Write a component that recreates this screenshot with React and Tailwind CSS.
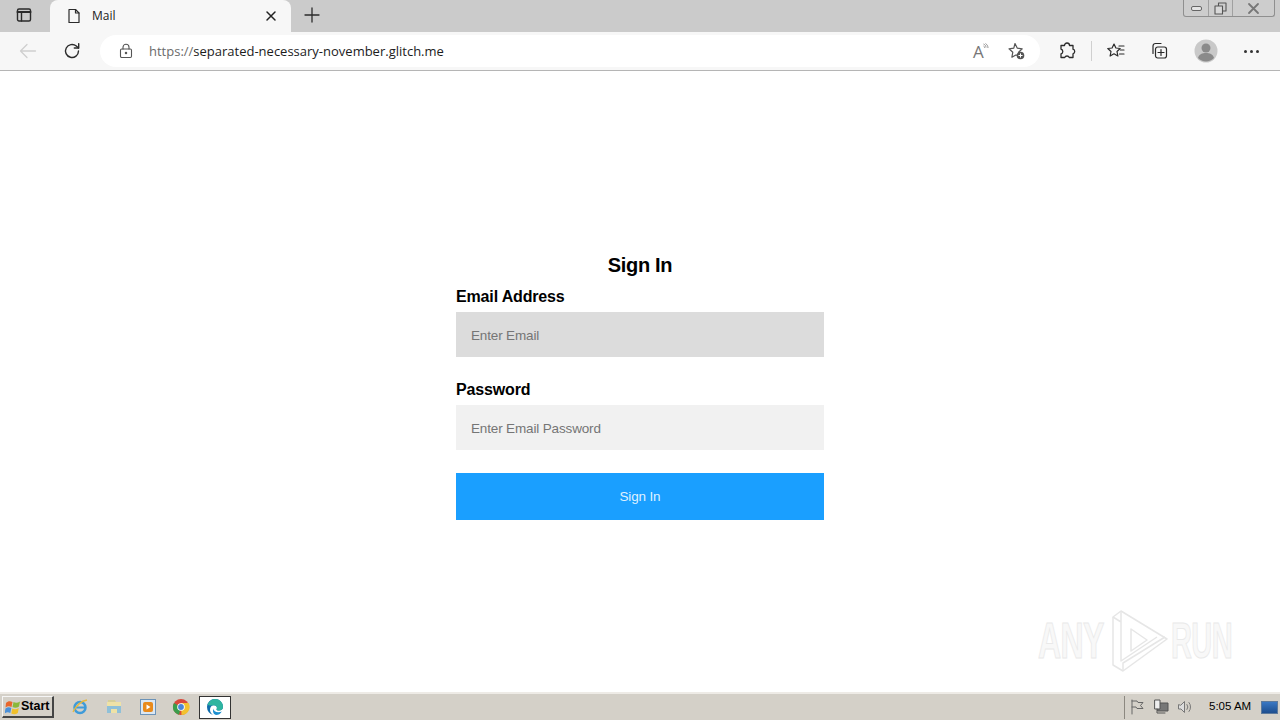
import React from "react";

const ink = "#2b2b2b";

function Stroke({ size = 20, children, color = ink, width = 1.3, viewBox = "0 0 20 20" }) {
  return (
    <svg width={size} height={size} viewBox={viewBox} fill="none" stroke={color} strokeWidth={width} strokeLinecap="round" strokeLinejoin="round">
      {children}
    </svg>
  );
}

function TabBar() {
  return (
    <div className="flex h-8 bg-[#cbcbcb]">
      <div className="flex w-[48px] items-center justify-center pb-[2px]">
        <Stroke size={16} viewBox="0 0 16 16" width={1.4}>
          <rect x="1.5" y="2" width="13" height="12" rx="1.5" />
          <path d="M1.5 5h13" strokeWidth="2" />
          <path d="M5.5 5v9" />
        </Stroke>
      </div>
      <div className="ml-[2px] flex w-[241px] items-center rounded-t-lg bg-[#f7f7f7] pl-[16px] pr-[14px]">
        <Stroke size={16} viewBox="0 0 16 16" width={1.2}>
          <path d="M3 1.5h6.5L13 5v9.5H3z" />
          <path d="M9.5 1.5V5H13" />
        </Stroke>
        <span className="ml-[10px] flex-1 text-[12px] text-[#222]">Mail</span>
        <Stroke size={12} viewBox="0 0 12 12" width={1.5} color="#222">
          <path d="M2 2l8 8M10 2l-8 8" />
        </Stroke>
      </div>
      <div className="ml-[13px] flex items-center pb-[2px]">
        <Stroke size={16} viewBox="0 0 16 16" width={1.3}>
          <path d="M8 1v14M1 8h14" />
        </Stroke>
      </div>
      <div className="flex-1" />
      <WindowButtons />
    </div>
  );
}

function WindowButtons() {
  return (
    <div className="mr-[5px] flex h-[17px] w-[92px] items-center rounded-b-[3px] border border-t-0 border-[#8f8f8f] bg-[#cdcdcd]">
      <div className="flex h-full w-[24px] items-center justify-center">
        <div className="h-[5px] w-[11px] rounded-[2px] border border-[#666] bg-[#e4e4e4]" />
      </div>
      <div className="flex h-full w-[25px] items-center justify-center border-x border-[#a0a0a0]">
        <Stroke size={13} viewBox="0 0 13 13" width={1.1} color="#555">
          <rect x="4.5" y="1" width="7.5" height="8" />
          <rect x="1" y="4" width="7.5" height="8" fill="#d8d8d8" />
        </Stroke>
      </div>
      <div className="flex h-full flex-1 items-center justify-center">
        <Stroke size={13} viewBox="0 0 13 13" width={1.8} color="#777">
          <path d="M2 2l9 9M11 2l-9 9" />
        </Stroke>
      </div>
    </div>
  );
}

function AddressBar() {
  return (
    <div className="flex h-[39px] items-center border-b border-[#b5b5b5] bg-[#f7f7f7]">
      <div className="flex w-[100px] shrink-0 items-center pl-[18px]">
        <Stroke size={20} color="#cfcfcf" width={1.3}>
          <path d="M17.5 10h-15M9 3.5L2.5 10 9 16.5" />
        </Stroke>
        <div className="ml-[24px]">
          <Stroke size={20} width={1.4}>
            <path d="M16.5 10a6.5 6.5 0 1 1-2.2-4.9L16.5 7" />
            <path d="M16.7 2.6V7h-4.4" />
          </Stroke>
        </div>
      </div>
      <div className="flex h-[32px] w-[940px] shrink-0 items-center rounded-full bg-white pl-[18px] pr-[14px]">
        <Stroke size={16} viewBox="0 0 16 16" width={1.1} color="#555">
          <rect x="2.5" y="6" width="11" height="8.5" rx="1.2" />
          <path d="M5 6V4.2a3 3 0 0 1 6 0V6" />
          <circle cx="8" cy="10" r="0.7" fill="#555" />
        </Stroke>
        <div className="ml-[15px] flex-1 pt-[1px] text-[13px]">
          <span className="text-[#6b6b6b]">https://</span>
          <span className="text-[#1c1c1c]">separated-necessary-november.glitch.me</span>
        </div>
        <div className="flex items-center gap-[17px]">
          <div className="flex w-[16px] items-start">
            <span className="text-[17px] leading-none text-[#777]">A</span>
            <svg width="6" height="8" viewBox="0 0 6 8" fill="none" stroke="#777" strokeWidth="0.8" className="-ml-[1px]">
              <path d="M0.500 1c1.500.5 2.500 2 2.500 3.500M0.500 3c.8.3 1.200 1 1.200 1.800M2.500 0.500c1.500 1 2.500 2.500 2.500 4.500" />
            </svg>
          </div>
          <Stroke size={20} color="#555" width={1.2}>
            <path d="M9 2.5l2.2 4.6 5 .7-3.6 3.4.6 3-3.4-.2-3.9 2.2.9-5L3 7.8l4.8-.7z" />
            <circle cx="14.5" cy="14.5" r="3.8" fill="#555" stroke="none" />
            <path d="M14.5 12.8v3.4M12.8 14.5h3.4" stroke="#fff" strokeWidth="1" />
          </Stroke>
        </div>
      </div>
      <div className="flex flex-1 items-center pl-[17px]">
        <Stroke size={20} width={1.3}>
          <path d="M7.5 4.5a2.5 2.5 0 0 1 5 0h3.5v3.7a2.4 2.4 0 0 1 0 4.6v3.7h-3.7a2.5 2.5 0 0 0-4.6 0H4v-3.6a2.5 2.5 0 0 0 0-4.8V4.5z" />
        </Stroke>
        <div className="ml-[14px] h-[20px] w-px bg-[#d0d0d0]" />
        <div className="ml-[14px]">
          <Stroke size={20} width={1.2}>
            <path d="M8 3l1.900 4 4.300.5-3.200 3 .9 4.500L8 12.800 4.100 15l.9-4.500-3.200-3L6.100 7z" />
            <path d="M13 5h5M14.500 9H18M13.500 13H18" />
          </Stroke>
        </div>
        <div className="ml-[23px]">
          <Stroke size={20} width={1.2}>
            <path d="M4 12.500V5a2.500 2.500 0 0 1 2.500-2.500H12" />
            <rect x="6.500" y="6" width="11" height="11" rx="2.200" />
            <path d="M12 8.500v6M9 11.500h6" />
          </Stroke>
        </div>
        <div className="ml-[25px]">
          <svg width="24" height="24" viewBox="0 0 24 24">
            <circle cx="12" cy="12" r="11.500" fill="#c9c9c9" />
            <circle cx="12" cy="9" r="4.500" fill="#8a8a8a" />
            <path d="M4 19c1-4 4.500-5 8-5s7 1 8 5a11 11 0 0 1-16 0z" fill="#8a8a8a" />
          </svg>
        </div>
        <div className="ml-[26px] flex gap-[3px]">
          <div className="h-[3px] w-[3px] rounded-full bg-[#333]" />
          <div className="h-[3px] w-[3px] rounded-full bg-[#333]" />
          <div className="h-[3px] w-[3px] rounded-full bg-[#333]" />
        </div>
      </div>
    </div>
  );
}

function SignInForm() {
  return (
    <form className="mx-auto flex w-[368px] flex-col pt-[182px] font-['Liberation_Sans',sans-serif]">
      <h1 className="text-center text-[20px] leading-[24px] font-bold tracking-[-0.3px] text-black">Sign In</h1>
      <label className="mt-[10px] text-[16px] leading-[20px] font-bold tracking-[-0.15px] text-black">Email Address</label>
      <input
        placeholder="Enter Email"
        className="mt-[5px] h-[45px] bg-[#dcdcdc] px-[15px] pt-[1px] text-[13.5px] tracking-[-0.15px] outline-none placeholder:text-[#757575]"
      />
      <label className="mt-[23px] text-[16px] leading-[20px] font-bold tracking-[-0.15px] text-black">Password</label>
      <input
        placeholder="Enter Email Password"
        className="mt-[5px] h-[45px] bg-[#f1f1f1] px-[15px] pt-[1px] text-[13.5px] tracking-[-0.15px] outline-none placeholder:text-[#757575]"
      />
      <button type="button" className="mt-[23px] h-[47px] bg-[#1a9fff] pt-[1px] text-[13.5px] tracking-[-0.15px] text-[#dff1ff]">
        Sign In
      </button>
    </form>
  );
}

function Watermark() {
  return (
    <div className="pointer-events-none absolute left-[1038px] top-[538px] flex items-center font-['Liberation_Sans',sans-serif] text-[50px] leading-none font-bold tracking-[-1px] text-[#f8f8f8] [-webkit-text-stroke:1px_#e9e9e9]">
      <span className="w-[73px] origin-left scale-x-[0.64]">ANY</span>
      <svg width="58" height="64" viewBox="0 0 58 64" fill="none" stroke="#e6e6e6" strokeWidth="1.500" strokeLinejoin="round">
        <path d="M10 2L56 30 12 62 2 56V8z" />
        <path d="M10 2v50l36-24M2 8l8 5" />
        <path d="M20 20L36 31 20 42z" />
        <path d="M12 62l0-8 42-26" />
      </svg>
      <span className="ml-[2px] w-[60px] origin-left scale-x-[0.58]">RUN</span>
    </div>
  );
}

function TaskIcon({ children, active }) {
  return (
    <div className={active ? "flex h-[23px] w-[32px] items-center justify-center border border-[#333] bg-white" : "flex h-[23px] w-[34px] items-center justify-center"}>
      {children}
    </div>
  );
}

function Taskbar() {
  return (
    <div className="flex h-[28px] items-center border-t-2 border-[#eeebe6] bg-[#d4d0c8] font-['Liberation_Sans',sans-serif]">
      <button type="button" className="ml-[2px] flex h-[22px] w-[52px] items-center border border-b-2 border-r-2 border-[#f5f5f5] border-b-[#444] border-r-[#444] pl-[2px] text-[12.5px] font-bold text-black">
        <svg width="16" height="16" viewBox="0 0 16 16">
          <path d="M1 4c2-2 4-2 6.500-1L6.500 8C4.500 7 2.500 7 0.500 8.500z" fill="#e8662c" />
          <path d="M8.500 3c2 1 4 1 6.500-.5l-1 5c-2 1.500-4.500 1.500-6.500.5z" fill="#8ab83a" />
          <path d="M0.500 9.500c2-1.500 4-1.500 5.800-.5l-1 5c-2-1-3.800-1-5.800.5z" fill="#4a90d9" />
          <path d="M7.300 9.500c2 1 4 1 6.500-.5l-1 5c-2 1.500-4.500 1.500-6.500.5z" fill="#f0c02c" />
        </svg>
        Start
      </button>
      <div className="ml-[9px] flex items-center">
        <TaskIcon>
          <svg width="18" height="18" viewBox="0 0 18 18" fill="none">
            <circle cx="9" cy="9.500" r="5.500" stroke="#3f9bd9" strokeWidth="2.500" />
            <path d="M4 9.500h10" stroke="#3f9bd9" strokeWidth="2" />
            <path d="M2 14c3-6 8-11 14-12" stroke="#e8b83c" strokeWidth="1.300" />
          </svg>
        </TaskIcon>
        <TaskIcon>
          <svg width="16" height="16" viewBox="0 0 16 16">
            <path d="M1 3h14v11H1z" fill="#efe2a6" />
            <path d="M2 1h7l1 2H2z" fill="#d6cf9a" />
            <path d="M1 7h14v7h-4v-4H5v4H1z" fill="#8fc0d8" />
          </svg>
        </TaskIcon>
        <TaskIcon>
          <svg width="16" height="16" viewBox="0 0 16 16">
            <rect x="0.500" y="0.500" width="15" height="15" fill="#dbe7f3" stroke="#6c93b8" />
            <rect x="3" y="3" width="10" height="10" rx="2" fill="#e88a1c" />
            <path d="M6.500 5.500l4 2.500-4 2.500z" fill="#fff" />
          </svg>
        </TaskIcon>
        <div className="-ml-[1px] mr-[1px]">
          <TaskIcon>
            <svg width="18" height="18" viewBox="0 0 18 18">
              <circle cx="9" cy="9" r="8" fill="#d9483b" />
              <path d="M9 9L2 5a8 8 0 0 0 5 11.800z" fill="#3a9d4c" />
              <path d="M9 5h7.500a8 8 0 0 1-7 12z" fill="#f2c230" />
              <circle cx="9" cy="9" r="3.800" fill="#fff" />
              <circle cx="9" cy="9" r="2.900" fill="#4a86d9" />
            </svg>
          </TaskIcon>
        </div>
        <TaskIcon active>
          <svg width="18" height="18" viewBox="0 0 18 18">
            <path d="M1 9a8 8 0 0 1 16 0c0 2-1.500 3.500-4 3.500-1.500 0-2.500-.5-2.500-1.300 1-1 .5-4-2.500-4-2.500 0-4 2-4 4.500 0 2.500 1.500 4.500 3.500 5.300A8 8 0 0 1 1 9z" fill="#0f6cab" />
            <path d="M1.500 6.500C3 3 6 1 9 1c4.500 0 8 3.500 8 8 0 2-1.500 3.500-4 3.500-1.500 0-2.500-.5-2.500-1.300 1-1 .5-4-2.500-4-3 0-4.500 1-6.500-.7z" fill="#2fb5a0" />
            <path d="M10 17c2.500 0 4.500-1 5.800-3.500-2 1-5 1.200-7-.3-.9-.7-1.300-1.700-1.300-2.700-1 2.500-.5 5.500 2.500 6.500z" fill="#1b8fd0" />
          </svg>
        </TaskIcon>
      </div>
      <div className="flex-1" />
      <div className="flex h-[23px] w-[156px] items-center border-l border-[#8c8880] pl-[4px]">
        <Stroke size={16} viewBox="0 0 16 16" color="#666" width={1}>
          <path d="M3 1v14M3 2h5l1 1.500h5l-2.500 3 2.500 3H8l-1-1.500H3" />
        </Stroke>
        <div className="ml-[8px]">
          <Stroke size={16} viewBox="0 0 16 16" color="#555" width={1}>
            <rect x="5" y="4" width="10" height="8" fill="#777" />
            <rect x="2" y="1" width="5" height="9" fill="#eee" />
            <path d="M4 10v4h8" />
          </Stroke>
        </div>
        <div className="ml-[8px]">
          <Stroke size={16} viewBox="0 0 16 16" color="#777" width={1}>
            <path d="M1.500 6v4H4l3.500 3.500v-11L4 6z" fill="#ddd" />
            <path d="M10 5.500a4 4 0 0 1 0 5M12 3.500a7 7 0 0 1 0 9" />
          </Stroke>
        </div>
        <span className="ml-[16px] text-[11.5px] text-black">5:05 AM</span>
        <div className="ml-[10px] h-[13px] w-[17px] border border-[#5d7a9c] bg-gradient-to-b from-[#3a78c4] to-[#1d4e8f]" />
      </div>
    </div>
  );
}

export default function App() {
  return (
    <div className="relative flex h-[720px] w-[1280px] flex-col overflow-hidden bg-white font-['Open_Sans',sans-serif]">
      <TabBar />
      <AddressBar />
      <main className="relative flex-1 overflow-hidden bg-white">
        <SignInForm />
        <Watermark />
      </main>
      <Taskbar />
    </div>
  );
}
